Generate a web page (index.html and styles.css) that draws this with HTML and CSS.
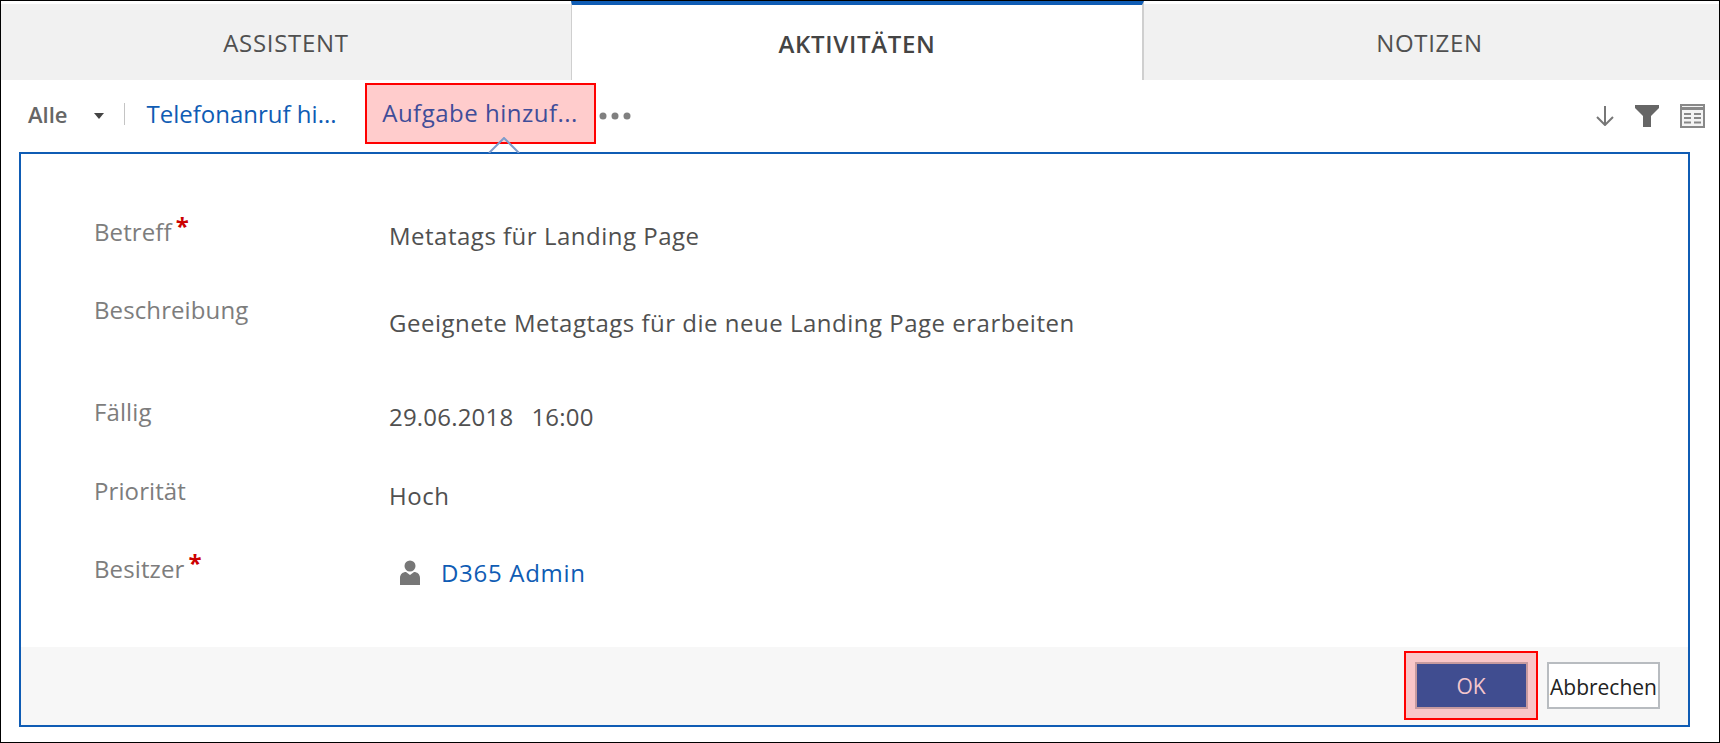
FILE: index.html
```html
<!DOCTYPE html>
<html>
    <head>
        <meta charset="UTF-8">
        <link rel="stylesheet" href="styles.css">
    </head>
    <body>
        <div class="frame">
            <!-- tabs -->
            <div class="tabs">
                <div class="tab">ASSISTENT</div>
                <div class="tab tab-active">AKTIVITÄTEN</div>
                <div class="tab tab-last">NOTIZEN</div>
            </div>

            <!-- toolbar -->
            <div class="toolbar">
                <span class="filter">Alle</span>
                <svg class="caret" width="10" height="6" viewBox="0 0 10 6"><path d="M0 0h10L5 6z" fill="#444"></path></svg>
                <span class="sep"></span>
                <a class="action">Telefonanruf hi...</a>
                <a class="action action-marked">Aufgabe hinzuf...</a>
                <svg class="more" width="32" height="8" viewBox="0 0 32 8">
                    <circle cx="4" cy="4" r="3.500" fill="#808080"></circle>
                    <circle cx="16" cy="4" r="3.500" fill="#808080"></circle>
                    <circle cx="28" cy="4" r="3.500" fill="#808080"></circle>
                </svg>
                <div class="tools">
                    <svg width="18" height="20" viewBox="0 0 18 20"><path d="M9 0v19M1 11l8 8 8-8" fill="none" stroke="#777" stroke-width="2"></path></svg>
                    <svg width="24" height="22" viewBox="0 0 24 22"><path d="M0 0h24v3l-8 8v11H8V11L0 3z" fill="#666"></path></svg>
                    <svg width="25" height="24" viewBox="0 0 25 24">
                        <rect x="1" y="1" width="23" height="22" fill="#f4f4f4" stroke="#888" stroke-width="2"></rect>
                        <path d="M1 4.500h23" stroke="#888" stroke-width="3"></path>
                        <path d="M4 10h7M14 10h7M4 14h7M14 14h7M4 18.500h7M14 18.500h7" stroke="#888" stroke-width="2"></path>
                    </svg>
                </div>
            </div>

            <!-- form panel -->
            <div class="panel">
                <svg class="notch" width="32" height="16" viewBox="0 0 32 16"><path d="M1 16L16 1l15 15" fill="none" stroke="#7d9bcb" stroke-width="2"></path></svg>
                <div class="form">
                    <div class="row row-subject">
                        <div class="label">Betreff<span class="req">*</span></div>
                        <div class="value">Metatags für Landing Page</div>
                    </div>
                    <div class="row row-desc">
                        <div class="label">Beschreibung</div>
                        <div class="value">Geeignete Metagtags für die neue Landing Page erarbeiten</div>
                    </div>
                    <div class="row row-due">
                        <div class="label">Fällig</div>
                        <div class="value value-date"><span>29.06.2018</span><span>16:00</span></div>
                    </div>
                    <div class="row row-prio">
                        <div class="label">Priorität</div>
                        <div class="value">Hoch</div>
                    </div>
                    <div class="row row-owner">
                        <div class="label">Besitzer<span class="req">*</span></div>
                        <div class="value value-owner">
                            <svg width="20" height="25" viewBox="0 0 20 25">
                                <circle cx="10" cy="6" r="5.500" fill="#777"></circle>
                                <path d="M0 25v-7c0-4 3-6 6-6l4 3 4-3c3 0 6 2 6 6v7z" fill="#777"></path>
                            </svg>
                            <a class="owner-link">D365 Admin</a>
                        </div>
                    </div>
                </div>
                <div class="footer">
                    <div class="ok-mark"><button class="btn btn-ok">OK</button></div>
                    <button class="btn btn-cancel">Abbrechen</button>
                </div>
            </div>
        </div>
    </body>
</html>
```

FILE: styles.css
```css
body{
    margin: 0;
    background-color: #fff;
    font-family: "Open Sans", "Liberation Sans", sans-serif;
}

.frame{
    box-sizing: border-box;
    width: 1720px;
    height: 743px;
    border: 1px solid #000;
}

/* tabs */
.tabs{
    display: flex;
    height: 79px;
}

.tab{
    flex: 0 0 570px;
    box-sizing: border-box;
    margin-top: 3px;
    padding-top: 1px;
    display: flex;
    align-items: center;
    justify-content: center;
    background-color: #f1f1f1;
    font-size: 24px;
    letter-spacing: 0.7px;
    color: #505050;
}

.tab-active{
    flex: 0 0 573px;
    margin-top: 0;
    border-top: 4px solid #0f5cb4;
    border-left: 1px solid #cfcfcf;
    border-right: 2px solid #cfcfcf;
    background-color: #fff;
    font-weight: 600;
    color: #444;
}

.tab-last{
    flex: 1;
    padding-right: 4px;
}

/* toolbar */
.toolbar{
    box-sizing: border-box;
    display: flex;
    align-items: center;
    height: 72px;
    padding-bottom: 5px;
    font-size: 24px;
}

.filter{
    margin-left: 27px;
    font-size: 22px;
    font-weight: 600;
    color: #666;
}

.caret{
    margin: 5px 0 0 26px;
}

.sep{
    width: 1px;
    height: 22px;
    margin: 0 22px 0 20px;
    background-color: #c4c4c4;
}

.action{
    color: #0f5cb4;
}

.action-marked{
    box-sizing: border-box;
    width: 231px;
    height: 61px;
    margin: 0 3px 0 28px;
    padding-bottom: 2px;
    display: flex;
    align-items: center;
    justify-content: center;
    border: 2px solid #f00;
    background-color: #fcc;
    color: #3f4d99;
    letter-spacing: 0.5px;
}

.more{
    margin-top: 5px;
}

.tools{
    margin: 5px 14px 0 auto;
    display: flex;
    align-items: center;
    gap: 21px;
}

/* form panel */
.panel{
    position: relative;
    box-sizing: border-box;
    height: 575px;
    margin: 0 29px 0 18px;
    border: 2px solid #0f5cb4;
    display: flex;
    flex-direction: column;
}

.notch{
    position: absolute;
    left: 467px;
    top: -17px;
}

.form{
    flex: 1;
    padding-top: 65px;
}

.row{
    display: flex;
    align-items: flex-start;
    padding-left: 73px;
    font-size: 24px;
    letter-spacing: 0.5px;
}

.row-subject{ height: 87px; }
.row-desc{ height: 94px; }
.row-due{ height: 79px; }
.row-prio{ height: 77px; }

.label{
    flex: 0 0 295px;
    margin-top: -4px;
    color: #7d7d7d;
    letter-spacing: 0.1px;
}

.row-desc .label{ margin-top: -13px; }
.row-due .label{ margin-top: -5px; }
.row-prio .label{ margin-top: -5px; }

.req{
    position: relative;
    top: -6px;
    margin-left: 4px;
    color: #c00;
    font-weight: 700;
}

.value{
    color: #505050;
}

.value-date{
    display: flex;
    gap: 18px;
    letter-spacing: 0.2px;
}

.value-owner{
    display: flex;
    align-items: center;
    gap: 21px;
    margin-left: 11px;
}

.owner-link{
    color: #0f5cb4;
    letter-spacing: 0.7px;
}

.footer{
    box-sizing: border-box;
    height: 78px;
    display: flex;
    align-items: center;
    justify-content: flex-end;
    gap: 9px;
    padding: 0 28px 2px 0;
    background-color: #f7f7f7;
}

.ok-mark{
    box-sizing: border-box;
    width: 134px;
    height: 69px;
    display: flex;
    align-items: center;
    justify-content: center;
    border: 2px solid #f00;
    background-color: #f9c6c8;
}

.btn{
    box-sizing: border-box;
    width: 113px;
    height: 47px;
    padding: 2px 0 0;
    font-family: "Open Sans", "Liberation Sans", sans-serif;
    font-size: 21px;
}

.btn-ok{
    border: 2px solid #c79a9f;
    background-color: #404d90;
    color: #f4c6cc;
}

.btn-cancel{
    padding-top: 4px;
    border: 2px solid #b8bcc0;
    background-color: #fff;
    color: #222;
}
```
